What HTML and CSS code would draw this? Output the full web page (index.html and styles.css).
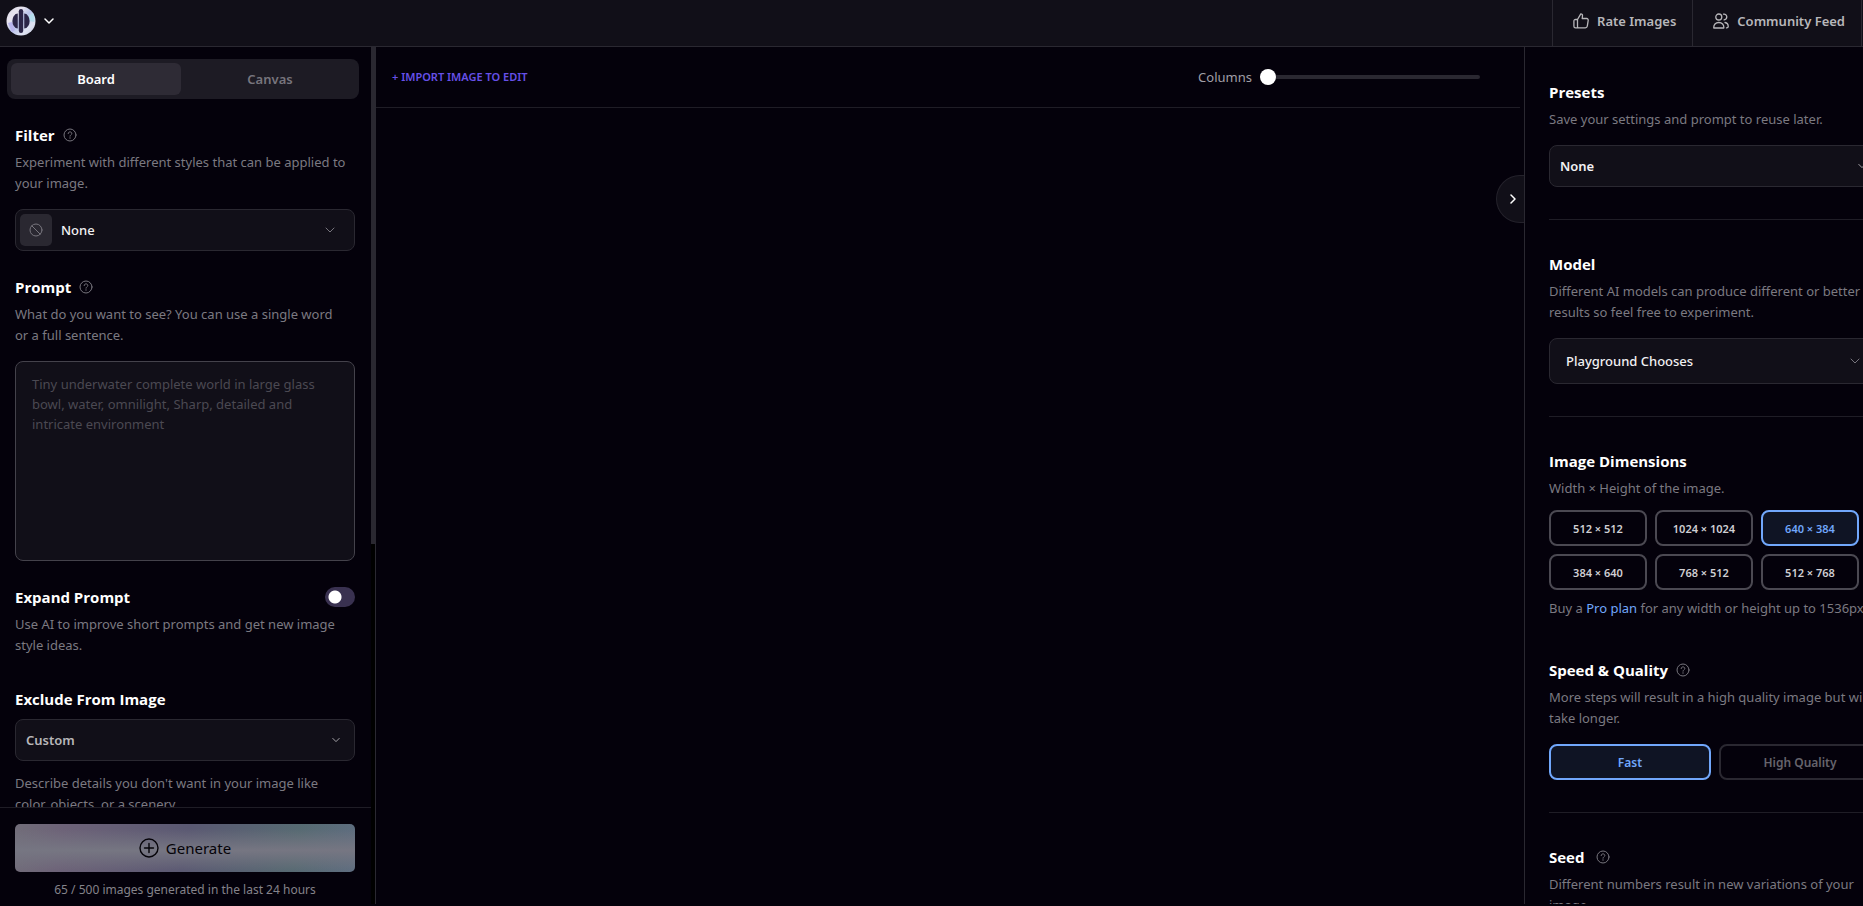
FILE: index.html
```html
<!DOCTYPE html>
<html lang="en">
<head>
<meta charset="utf-8">
<title>Board</title>
<link rel="stylesheet" href="styles.css">
</head>
<body>
<svg class="sprite" aria-hidden="true">
  <symbol id="help" viewBox="0 0 14 14"><circle cx="7" cy="7" r="6"/><path d="M5.2 5.600C5.200 4.500 6 3.900 7 3.900s1.800.6 1.800 1.600c0 1.200-1.800 1.400-1.800 2.700M7 9.700v.6"/></symbol>
  <symbol id="chevron" viewBox="0 0 10 10"><path d="M1 3l4 4 4-4"/></symbol>
</svg>
<header class="topbar">
  <button class="brand" aria-label="Main menu">
    <svg class="logo" viewBox="0 0 30 30">
      <defs>
        <linearGradient id="pearl" x1="0" y1="0" x2="1" y2="1">
          <stop offset="0" stop-color="#dcdbe6"/><stop offset=".3" stop-color="#e8e4f0"/><stop offset=".5" stop-color="#b9c3ea"/><stop offset=".75" stop-color="#dfe3f2"/><stop offset="1" stop-color="#c3c6dc"/>
        </linearGradient>
      </defs>
      <circle cx="15" cy="15" r="14.500" fill="url(#pearl)"/>
      <path d="M27 7a14 14 0 0 1 1.500 9l-5-1-1-5z" fill="#b4dcec"/>
      <path d="M2 17l4-1 3 8-3 2z" fill="#b8b4ec"/>
      <path d="M11.500 7.200v15.600A8.500 8.500 0 0 1 11.500 7.200zM18.500 7.200v15.600A8.500 8.500 0 0 0 18.500 7.200z" fill="#2b2547"/>
      <rect x="12.800" y="3" width="4.400" height="24" rx="2.200" fill="#2b2547"/>
      <path d="M10.500 8v14M19.500 8v14" stroke="#2b2547" stroke-width="2"/>
    </svg>
    <svg class="icon chev"><use href="#chevron"/></svg>
  </button>
  <nav class="nav">
    <a class="nav-link" href="#rate">
      <svg class="icon nav-icon" viewBox="0 0 16 16"><path d="M4.500 6.500L7.800.8C9 .8 9.600 1.800 9.500 2.800L9.200 5.500h4.500c1 0 1.600.9 1.500 1.800l-.9 5.900c-.2 1-.9 1.600-1.900 1.600H5.500c-1 0-1-.3-1-1.300zM4.500 6.500H2.600C1.500 6.500.9 7 .9 8v5.200c0 1 .6 1.600 1.700 1.600h2.200"/></svg>
      Rate Images</a>
    <a class="nav-link" href="#feed">
      <svg class="icon nav-icon" viewBox="0 0 16 16"><circle cx="5.800" cy="4" r="3"/><path d="M.8 15c-.3-3.300 1.800-5.500 5-5.500s5.300 2.200 5 5.500zM10.500 1.200c1.700-.4 3.300.8 3.300 2.600 0 1.700-1.200 2.900-2.700 3.100M12 9.500c2.200.4 3.300 2 3.200 4.200 0 .8-.7 1.100-1.700 1.200"/></svg>
      Community Feed</a>
  </nav>
</header>

<div class="workspace">
  <aside class="sidebar">
    <div class="sidebar-main">
      <div class="settings">
        <div class="tabs" role="tablist">
          <button class="tab tab-active" role="tab" aria-selected="true">Board</button>
          <button class="tab" role="tab" aria-selected="false">Canvas</button>
        </div>
        <section class="field">
          <h2 class="title"><label for="filter">Filter</label><svg class="icon help"><use href="#help"/></svg></h2>
          <p class="desc">Experiment with different styles that can be applied to your image.</p>
          <div class="select-box filter-box">
            <span class="thumb"><svg class="icon none-icon" viewBox="0 0 14 14"><circle cx="7" cy="7" r="6"/><path d="M2.800 2.800l8.400 8.400"/></svg></span>
            <select class="select medium" id="filter"><option>None</option></select>
            <svg class="icon chev"><use href="#chevron"/></svg>
          </div>
        </section>
        <section class="field">
          <h2 class="title"><label for="prompt">Prompt</label><svg class="icon help"><use href="#help"/></svg></h2>
          <p class="desc">What do you want to see? You can use a single word or a full sentence.</p>
          <textarea class="prompt" id="prompt" placeholder="Tiny underwater complete world in large glass bowl, water, omnilight, Sharp, detailed and intricate environment"></textarea>
        </section>
        <section class="field">
          <h2 class="title spread"><label for="expand">Expand Prompt</label><input class="toggle" type="checkbox" role="switch" id="expand"></h2>
          <p class="desc">Use AI to improve short prompts and get new image style ideas.</p>
        </section>
        <section class="field exclude">
          <h2 class="title"><label for="exclude">Exclude From Image</label></h2>
          <div class="select-box">
            <select class="select muted" id="exclude"><option>Custom</option></select>
            <svg class="icon chev small light"><use href="#chevron"/></svg>
          </div>
          <p class="desc">Describe details you don't want in your image like color, objects, or a scenery.</p>
        </section>
      </div>
      <footer class="actions">
        <button class="generate">
          <svg class="icon plus" viewBox="0 0 20 20"><circle cx="10" cy="10" r="9"/><path d="M10 5.500v9M5.500 10h9"/></svg>
          Generate</button>
        <p class="usage">65 / 500 images generated in the last 24 hours</p>
      </footer>
    </div>
    <div class="scrollbar"><div class="scroll-thumb"></div></div>
  </aside>

  <main class="board">
    <div class="toolbar">
      <button class="import">+ IMPORT IMAGE TO EDIT</button>
      <div class="columns">
        <label for="columns">Columns</label>
        <input class="slider" type="range" id="columns" min="1" max="8" value="1">
      </div>
    </div>
    <button class="collapse" aria-label="Collapse panel"><svg class="icon collapse-icon" viewBox="0 0 10 10"><path d="M3 1l4 4-4 4"/></svg></button>
  </main>

  <aside class="panel">
    <div class="panel-content">
      <section class="group">
        <h2 class="title"><label for="preset">Presets</label></h2>
        <p class="desc">Save your settings and prompt to reuse later.</p>
        <div class="select-box">
          <select class="select" id="preset"><option>None</option></select>
          <svg class="icon chev small light"><use href="#chevron"/></svg>
        </div>
      </section>
      <section class="group">
        <h2 class="title"><label for="model">Model</label></h2>
        <p class="desc">Different AI models can produce different or better results so feel free to experiment.</p>
        <div class="select-box model-box">
          <select class="select medium" id="model"><option>Playground Chooses</option></select>
          <svg class="icon chev"><use href="#chevron"/></svg>
        </div>
      </section>
      <section class="group">
        <h2 class="title">Image Dimensions</h2>
        <p class="desc">Width × Height of the image.</p>
        <div class="dimensions">
          <button class="choice">512 × 512</button>
          <button class="choice">1024 × 1024</button>
          <button class="choice chosen">640 × 384</button>
          <button class="choice">384 × 640</button>
          <button class="choice">768 × 512</button>
          <button class="choice">512 × 768</button>
        </div>
        <p class="desc upsell">Buy a <a class="link" href="#pro">Pro plan</a> for any width or height up to 1536px.</p>
        <h2 class="title">Speed &amp; Quality<svg class="icon help"><use href="#help"/></svg></h2>
        <p class="desc">More steps will result in a high quality image but will take longer.</p>
        <div class="speeds">
          <button class="choice speed chosen">Fast</button>
          <button class="choice speed dim">High Quality</button>
        </div>
      </section>
      <section class="group">
        <h2 class="title seed">Seed<svg class="icon help"><use href="#help"/></svg></h2>
        <p class="desc">Different numbers result in new variations of your image.</p>
      </section>
    </div>
  </aside>
</div>
</body>
</html>
```
FILE: styles.css
```css
* { box-sizing: border-box; }

body {
  margin: 0;
  height: 100vh;
  padding-bottom: 2px;
  display: flex;
  flex-direction: column;
  overflow: hidden;
  background: #04010b;
  color: #fff;
  font-family: "Noto Sans", "Open Sans", sans-serif;
  font-size: 13px;
  line-height: 21px;
}

h2, p { margin: 0; }
button, select, textarea, input { font: inherit; color: inherit; margin: 0; }
button { border: 0; padding: 0; background: none; }
a { text-decoration: none; }

.sprite { display: none; }
.icon { flex: none; fill: none; stroke: currentColor; stroke-linecap: round; stroke-linejoin: round; }
.chev { width: 10px; height: 10px; }
.small { width: 8px; height: 8px; }
.help { width: 14px; height: 14px; color: #77757d; }

/* Top bar */
.topbar {
  flex: none;
  height: 47px;
  display: flex;
  justify-content: space-between;
  border-bottom: 1px solid #2a2831;
  background: #110f18;
}
.brand { display: flex; align-items: center; gap: 8px; padding: 0 6px 4px; }
.brand .chev { stroke-width: 1.5; }
.logo { width: 30px; height: 30px; }
.nav { display: flex; padding-right: 1px; border-left: 1px solid #2a2831; }
.nav-link {
  display: flex;
  align-items: center;
  gap: 8px;
  padding: 0 16px 4px 20px;
  border-right: 1px solid #2a2831;
  color: #b8b7ba;
  font-weight: 600;
}
.nav-icon { width: 16px; height: 16px; stroke-width: 1.3; }

.workspace { flex: 1; min-height: 0; display: flex; }

/* Left sidebar */
.sidebar { flex: none; width: 376px; display: flex; border-right: 1px solid #2a2831; }
.sidebar-main { flex: 1; min-width: 0; display: flex; flex-direction: column; }
.scrollbar { width: 4px; background: #000; }
.scroll-thumb { height: 58%; background: #2a2831; }
.settings { flex: 1; min-height: 0; overflow: hidden; padding: 12px 16px 0 15px; }
.settings .desc { padding-right: 8px; }
.tabs {
  display: grid;
  grid-template-columns: 1fr 1fr;
  gap: 4px;
  margin: 0 -4px 0 -8px;
  padding: 4px;
  border-radius: 8px;
  background: #1d1b24;
}
.tab { height: 32px; border-radius: 6px; color: #77757d; font-weight: 600; }
.tab-active { background: #2e2b35; color: #fff; }

.field { margin-top: 24px; }
.exclude { margin-top: 31px; }
.title {
  display: flex;
  align-items: center;
  gap: 8px;
  margin-bottom: 5px;
  font-family: "Open Sans", "Noto Sans", sans-serif;
  font-size: 15px;
  font-weight: 700;
  line-height: 24px;
}
.spread { justify-content: space-between; }
.seed { gap: 12px; }
.desc { color: #7b7981; }

.select-box {
  display: flex;
  align-items: center;
  height: 42px;
  margin-top: 15px;
  padding: 0 14px 0 10px;
  border: 1px solid #2a2831;
  border-radius: 8px;
  background: #110f18;
  color: #77757d;
}
.select {
  flex: 1;
  appearance: none;
  border: 0;
  padding: 0;
  background: none;
  color: #f1f1f3;
  font-weight: 600;
}
.muted { color: #b8b7ba; }
.light { color: #c9c8cc; }
.filter-box { gap: 9px; padding: 0 19px 0 4px; }
.medium { font-weight: 500; }
.thumb {
  display: grid;
  place-items: center;
  width: 32px;
  height: 32px;
  border-radius: 5px;
  background: #2a2831;
}
.none-icon { width: 14px; height: 14px; }
.exclude .select-box { margin: 8px 0 12px; }

.prompt {
  display: block;
  width: 100%;
  height: 200px;
  margin-top: 15px;
  padding: 12px 16px;
  border: 1px solid #44424b;
  border-radius: 8px;
  background: #110f18;
  line-height: 20px;
  resize: none;
}
.prompt::placeholder { color: #4b4952; }

.toggle {
  appearance: none;
  width: 30px;
  height: 20px;
  border-radius: 10px;
  background: radial-gradient(circle at 10px 10px, #fff 6px, #393150 7px);
}

.actions {
  flex: none;
  padding: 16px 16px 4px 15px;
  border-top: 1px solid #1f1d26;
  text-align: center;
}
.generate {
  display: flex;
  align-items: center;
  justify-content: center;
  gap: 7px;
  width: 100%;
  height: 48px;
  border-radius: 5px;
  background:
    linear-gradient(#76768200 10%, #767682 55%, #76768200 100%),
    linear-gradient(100deg, #716d79, #6d6278 14%, #5a5872 50%, #566a72 82%, #5e6d80);
  color: #050309;
  font-size: 15px;
  font-weight: 400;
}
.plus { width: 20px; height: 20px; stroke-width: 1.4; }
.usage { margin-top: 7px; color: #85838a; font-size: 12px; }

/* Board */
.board { position: relative; flex: 1; min-width: 0; }
.toolbar {
  display: flex;
  align-items: center;
  justify-content: space-between;
  height: 61px;
  margin-right: 4px;
  padding: 0 40px 0 16px;
  border-bottom: 1px solid #1f1d26;
}
.import { color: #6650e8; font-size: 11px; font-weight: 600; line-height: 20px; }
.columns { display: flex; align-items: center; gap: 8px; color: #a09ea6; }
.slider { appearance: none; width: 220px; height: 16px; background: none; }
.slider::-webkit-slider-runnable-track { height: 4px; border-radius: 2px; background: #2a2831; }
.slider::-webkit-slider-thumb {
  appearance: none;
  width: 16px;
  height: 16px;
  margin-top: -6px;
  border-radius: 50%;
  background: #fff;
}
.collapse {
  position: absolute;
  top: 128px;
  right: 0;
  width: 28px;
  height: 48px;
  padding-left: 5px;
  border: 1px solid #24222b;
  border-right: 0;
  border-radius: 24px 0 0 24px;
  background: #110f18;
}
.collapse-icon { display: block; margin: auto; width: 10px; height: 10px; stroke-width: 1.5; }

/* Right panel, whose content runs past the window edge */
.panel { flex: none; width: 339px; overflow: hidden; border-left: 1px solid #2a2831; }
.panel-content { width: 380px; padding: 33px 24px 0; }
.group + .group { margin-top: 32px; padding-top: 32px; border-top: 1px solid #1f1d26; }
.model-box { height: 46px; padding: 0 20px 0 16px; }
.dimensions { display: grid; grid-template-columns: repeat(3, 98px); gap: 8px; margin-top: 11px; }
.choice {
  height: 36px;
  border: 2px solid #4b4952;
  border-radius: 8px;
  color: #d0cfd3;
  font-size: 11px;
  font-weight: 600;
}
.speeds { display: grid; grid-template-columns: 1fr 1fr; gap: 8px; margin-top: 15px; }
.speed { font-size: 12px; }
.dim { border-color: #2a2831; color: #66646c; }
.chosen { border-color: #71a7fb; background: #0f1424; color: #71a7fb; }
.upsell { margin: 8px 0 39px; }
.link { color: #71a7fb; }
```
